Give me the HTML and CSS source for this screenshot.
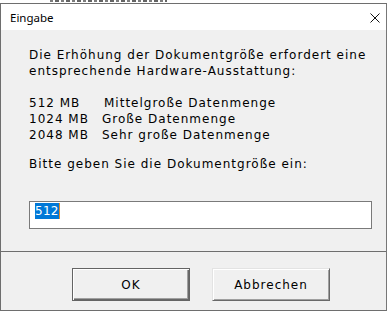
FILE: index.html
```html
<!DOCTYPE html>
<html lang="de">
<head>
<meta charset="utf-8">
<title>Eingabe</title>
<link rel="stylesheet" href="styles.css">
</head>
<body>
<div class="behind"><div class="behind-strip"></div></div>
<div class="window">
  <div class="titlebar">
    <span class="title">Eingabe</span>
    <svg class="close" width="10" height="10" viewBox="0 0 10 10"><path d="M0.5 0.5 L9.5 9.5 M9.5 0.5 L0.5 9.5" stroke="#111" stroke-width="1" fill="none"/></svg>
  </div>
  <div class="content">
    <p class="para">Die Erhöhung der Dokumentgröße erfordert eine<br>entsprechende Hardware-Ausstattung:</p>
    <div class="sizes">
      <span class="mb">512 MB</span><span class="desc first">Mittelgroße Datenmenge</span>
      <span class="mb">1024 MB</span><span class="desc">Große Datenmenge</span>
      <span class="mb">2048 MB</span><span class="desc">Sehr große Datenmenge</span>
    </div>
    <p class="para prompt">Bitte geben Sie die Dokumentgröße ein:</p>
    <div class="input"><span class="sel">512</span><span class="caret"></span></div>
  </div>
  <div class="footer">
    <button class="btn default">OK</button>
    <button class="btn">Abbrechen</button>
  </div>
</div>
</body>
</html>
```
FILE: styles.css
```css
html, body {
  margin: 0;
  padding: 0;
  background: #ffffff;
}
body {
  width: 391px;
  height: 312px;
  overflow: hidden;
  font-family: "DejaVu Sans", Verdana, sans-serif;
}
.behind {
  height: 3px;
  padding-left: 50px;
}
.behind-strip {
  width: 117px;
  height: 2px;
  background: repeating-linear-gradient(90deg, #444 0 3px, transparent 3px 5px, #222 5px 9px, transparent 9px 11px);
  opacity: 0.7;
}
.window {
  width: 387px;
  height: 308px;
  box-sizing: border-box;
  border: 1px solid #6e6e6e;
  border-right-color: #777;
  display: flex;
  flex-direction: column;
  background: #f0f0f0;
}
.titlebar {
  height: 26px;
  background: #ffffff;
  display: flex;
  align-items: center;
  justify-content: space-between;
  padding: 0 6px 0 9px;
}
.title {
  font-family: "Noto Sans", "Open Sans", sans-serif;
  font-size: 11.5px;
  color: #000;
  margin-top: 1px;
}
.close {
  margin-top: 1px;
}
.content {
  height: 221px;
  box-sizing: border-box;
  padding: 17px 14px 0 28px;
  font-size: 12px;
  line-height: 16px;
  letter-spacing: 1px;
  color: #000;
}
.para {
  margin: 0;
  white-space: nowrap;
}
.sizes {
  margin-top: 16px;
  display: grid;
  grid-template-columns: 73px auto;
}
.desc.first {
  padding-left: 2px;
}
.prompt {
  margin-top: 13px;
}
.input {
  margin-top: 29px;
  width: 343px;
  height: 28px;
  box-sizing: border-box;
  border: 1px solid #7a7a7a;
  background: #fff;
  padding: 1px 0 0 5px;
  display: flex;
  align-items: flex-start;
}
.sel {
  background: #0078d7;
  color: #fff;
  line-height: 16px;
  letter-spacing: 0.3px;
  padding: 0 0 0 0;
}
.caret {
  width: 1px;
  height: 16px;
  background: #e08a2c;
}
.footer {
  flex: 1;
  border-top: 1px solid #6e6e6e;
  display: flex;
  align-items: flex-start;
  padding: 16px 0 0 71px;
  gap: 22px;
}
.btn {
  width: 118px;
  height: 33px;
  box-sizing: border-box;
  background: #f0f0f0;
  font-family: "DejaVu Sans", Verdana, sans-serif;
  font-size: 12px;
  letter-spacing: 1px;
  color: #000;
  padding: 0;
  border: 1px solid;
  border-color: #e3e3e3 #696969 #696969 #e3e3e3;
  box-shadow: inset 1px 1px #ffffff, inset -1px -1px #a0a0a0;
}
.btn.default {
  border-color: #646464;
  box-shadow: inset 1px 1px #ffffff, inset -1px -1px #696969, inset -2px -2px #a0a0a0;
}
```
